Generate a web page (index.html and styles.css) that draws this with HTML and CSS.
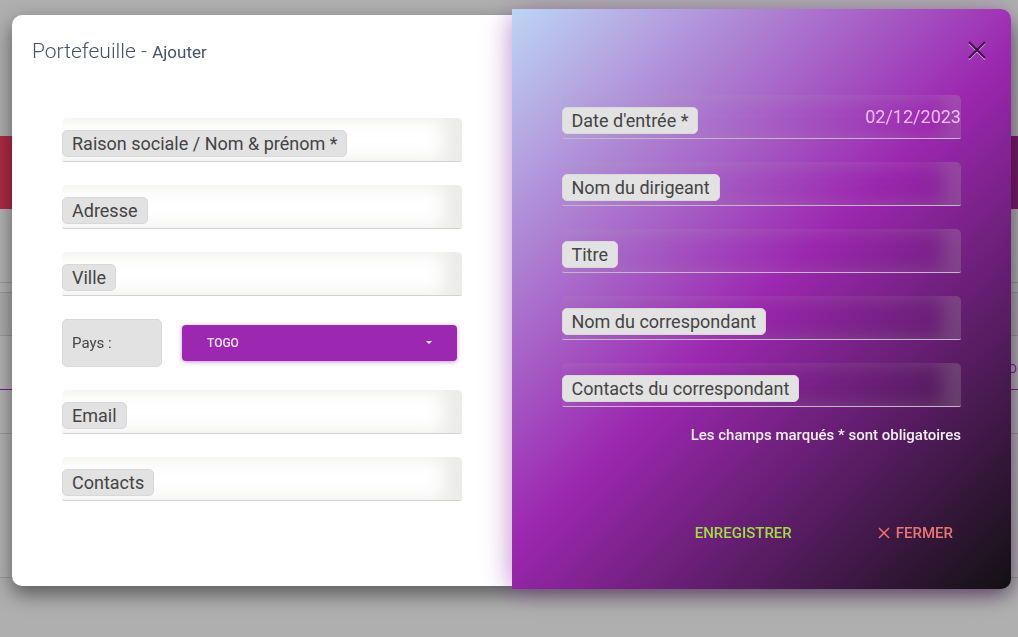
FILE: index.html
```html
<!DOCTYPE html>
<html lang="fr">
<head>
<meta charset="utf-8">
<meta name="viewport" content="width=device-width, initial-scale=1">
<title>Portefeuille - Ajouter</title>
<link rel="stylesheet" href="styles.css">
</head>
<body>
<div class="page">
  <div class="page-top"></div>
  <div class="page-banner"></div>
  <div class="page-card">
    <div class="page-row page-row-search"></div>
    <div class="page-row page-row-gap"></div>
    <div class="page-row page-row-head"></div>
    <div class="page-row page-row-active">O</div>
    <div class="page-row page-row-item"></div>
  </div>
</div>

<div class="overlay">
  <form class="dialog" role="dialog" aria-labelledby="dialog-title">
    <section class="panel-main">
      <h1 class="title" id="dialog-title">Portefeuille - <span class="title-action">Ajouter</span></h1>
      <div class="fields">
        <div class="field"><input class="field-input" id="raison" type="text"><label class="field-label" for="raison">Raison sociale / Nom &amp; prénom *</label></div>
        <div class="field"><input class="field-input" id="adresse" type="text"><label class="field-label" for="adresse">Adresse</label></div>
        <div class="field"><input class="field-input" id="ville" type="text"><label class="field-label" for="ville">Ville</label></div>
        <div class="country">
          <label class="country-label" for="pays">Pays :</label>
          <div class="country-box">
            <select class="country-select" id="pays"><option>TOGO</option></select>
            <svg class="country-caret" viewBox="0 0 6 3" aria-hidden="true"><path d="M0 0h6L3 3z" fill="currentColor"/></svg>
          </div>
        </div>
        <div class="field"><input class="field-input" id="email" type="email"><label class="field-label" for="email">Email</label></div>
        <div class="field"><input class="field-input" id="contacts" type="text"><label class="field-label" for="contacts">Contacts</label></div>
      </div>
    </section>

    <section class="panel-side">
      <div class="side-head">
        <button class="close" type="button" aria-label="Fermer la fenêtre">
          <svg class="close-icon" viewBox="0 0 20 20" aria-hidden="true">
            <path d="M2 3.500l16 16M18 3.500l-16 16" stroke="#d9a5e2" stroke-width="1.500" fill="none"/>
            <path d="M2 2l16 16M18 2L2 18" stroke="#3f1048" stroke-width="2" fill="none"/>
          </svg>
        </button>
      </div>
      <div class="fields">
        <div class="field"><input class="field-input field-date" id="date" type="text" value="02/12/2023"><label class="field-label" for="date">Date d'entrée *</label></div>
        <div class="field"><input class="field-input" id="dirigeant" type="text"><label class="field-label" for="dirigeant">Nom du dirigeant</label></div>
        <div class="field"><input class="field-input" id="titre" type="text"><label class="field-label" for="titre">Titre</label></div>
        <div class="field"><input class="field-input" id="correspondant" type="text"><label class="field-label" for="correspondant">Nom du correspondant</label></div>
        <div class="field"><input class="field-input" id="contacts-corr" type="text"><label class="field-label" for="contacts-corr">Contacts du correspondant</label></div>
      </div>
      <p class="note">Les champs marqués * sont obligatoires</p>
      <div class="actions">
        <button class="action action-save" type="submit">ENREGISTRER</button>
        <button class="action action-close" type="button">
          <svg class="action-icon" viewBox="0 0 12 12" aria-hidden="true"><path d="M1 1l10 10M11 1L1 11" stroke="currentColor" stroke-width="1.500" fill="none"/></svg>
          FERMER
        </button>
      </div>
    </section>
  </form>
</div>
</body>
</html>
```

FILE: styles.css
```css
* {
  box-sizing: border-box;
}

body {
  margin: 0;
  min-height: 100vh;
  background: #afafaf;
  font-family: Roboto, "Liberation Sans", sans-serif;
  overflow: hidden;
}

/* Dimmed page behind the dialog */
.page-top {
  height: 136px;
}

.page-banner {
  height: 73px;
  background: linear-gradient(90deg, #ae2b46, #761b66);
}

.page-card {
  height: 369px;
  background: #b3b3b3;
  border-bottom: 1px solid #999;
}

.page-row {
  border-bottom: 1px solid #999;
}

.page-row-search {
  height: 74px;
}

.page-row-gap {
  height: 10px;
}

.page-row-head {
  height: 43px;
  background: #acacac;
}

.page-row-active {
  height: 54px;
  padding: 24px 1px 0 0;
  border-bottom-color: #7a1b8a;
  color: #7a1b8a;
  font-size: 13px;
  line-height: 18px;
  text-align: right;
}

.page-row-item {
  height: 44px;
}

/* Dialog */
.overlay {
  position: fixed;
  inset: 0;
  padding: 15px 7px 48px 12px;
}

.dialog {
  display: grid;
  grid-template-columns: 1fr 1fr;
  margin: 0;
  border-radius: 10px;
  background: #fff;
  box-shadow: 0 8px 20px rgba(0, 0, 0, 0.5);
}

.panel-main {
  padding: 20px 50px 0;
}

.title {
  margin: 0 -30px 50px;
  color: #475266;
  font-size: 21px;
  font-weight: 300;
  line-height: 32px;
}

.title-action {
  font-size: 17px;
  font-weight: 400;
}

.fields {
  display: flex;
  flex-direction: column;
  gap: 23px;
}

.field {
  position: relative;
  height: 44px;
}

.field-input {
  display: block;
  width: 100%;
  height: 44px;
  padding: 0;
  border: 0;
  border-bottom: 1px solid #d2d2d2;
  border-radius: 5px 5px 2px 2px;
  background: transparent;
  box-shadow: inset -18px 0 18px rgba(176, 176, 168, 0.25);
  font-family: inherit;
  font-size: 18px;
  outline: 0;
}

.field-label {
  position: absolute;
  top: 12px;
  left: 0;
  padding: 0 9px;
  border: 1px solid #d8d8d8;
  border-radius: 5px;
  background: #e2e2e2;
  color: #444;
  font-size: 18px;
  line-height: 25px;
  white-space: nowrap;
}

.field-date {
  color: #f0bdfa;
  text-align: right;
}

.country {
  display: flex;
  align-items: center;
  gap: 20px;
  padding-right: 5px;
}

.country-label {
  width: 100px;
  padding: 0 9px;
  border: 1px solid #d8d8d8;
  border-radius: 5px;
  background: #e2e2e2;
  color: #444;
  font-size: 15px;
  line-height: 46px;
}

.country-box {
  position: relative;
  flex: 1;
}

.country-select {
  display: block;
  width: 100%;
  height: 36px;
  padding: 0 25px;
  border: 0;
  border-radius: 4px;
  background: #9c27b0;
  box-shadow: 0 1px 4px rgba(156, 39, 176, 0.5);
  color: #f6e6f8;
  font-family: inherit;
  font-size: 12px;
  font-weight: 500;
  appearance: none;
}

.country-caret {
  position: absolute;
  top: 16px;
  right: 25px;
  width: 6px;
  height: 3px;
  color: #fff;
  pointer-events: none;
}

.panel-side {
  margin: -6px 0 -3px;
  padding: 0 50px 38px;
  border-radius: 0 10px 10px 0;
  background: linear-gradient(135deg, #bdd5f4 0%, #9c27b0 50%, #111 100%);
  box-shadow: -5px 3px 24px -4px rgba(130, 20, 150, 0.4), 0 0 44px -6px rgba(80, 40, 120, 0.15);
}

.panel-side .field-input {
  border-bottom-color: #c8b4cc;
}

.side-head {
  display: flex;
  justify-content: flex-end;
  height: 86px;
  margin-right: -26px;
  padding-top: 31px;
}

.close {
  width: 20px;
  height: 20px;
  padding: 0;
  border: 0;
  background: none;
}

.close-icon {
  display: block;
  width: 20px;
  height: 20px;
}

.note {
  margin: 16px 0 68px;
  color: #f5eef7;
  font-size: 15px;
  font-weight: 500;
  line-height: 24px;
  text-align: right;
}

.actions {
  display: flex;
  justify-content: flex-end;
  gap: 70px;
}

.action {
  display: flex;
  align-items: center;
  gap: 6px;
  height: 36px;
  padding: 0 8px;
  border: 0;
  background: none;
  font-family: inherit;
  font-size: 15px;
  font-weight: 500;
}

.action-save {
  color: #9fdc45;
}

.action-close {
  color: #ea7674;
}

.action-icon {
  width: 12px;
  height: 12px;
}
```
